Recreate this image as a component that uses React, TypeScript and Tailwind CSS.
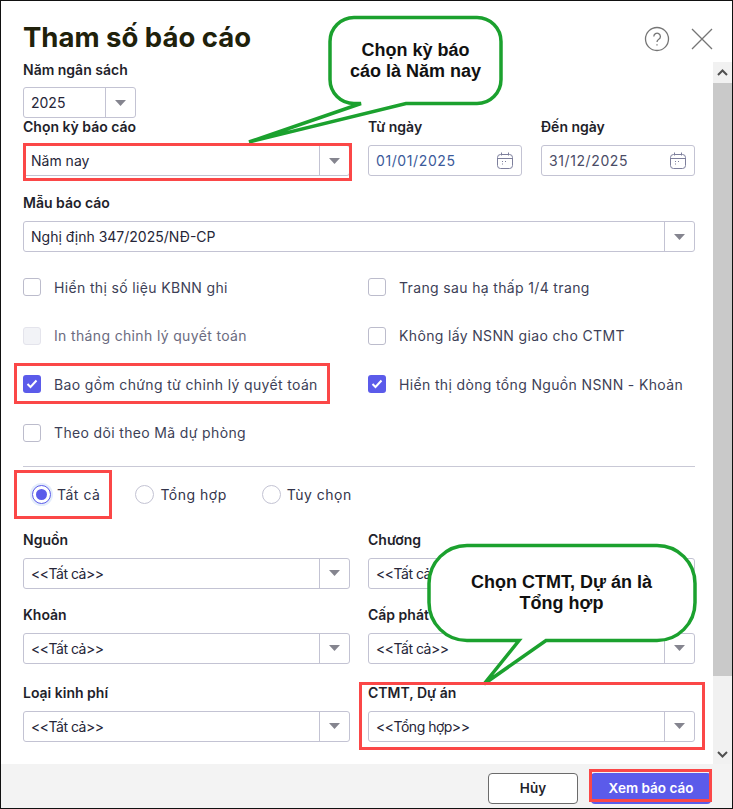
const font = { fontFamily: "Inter, sans-serif" };

function Arrow() {
  return (
    <svg width="11" height="6" viewBox="0 0 11 6">
      <path d="M0 0h11L5.500 6z" fill="#85858f" />
    </svg>
  );
}

function CalendarIcon() {
  return (
    <svg width="16" height="17" viewBox="0 0 16 17" fill="none" stroke="#7d7f9c" strokeWidth="1">
      <rect x="0.5" y="2.5" width="15" height="14" rx="3" />
      <path d="M0.5 6.5h15M4.5 0.5v3M11.5 0.5v3" />
      <path d="M5 9.5h1M8 9.500h1M5 12h1" />
    </svg>
  );
}

function Select({ value, className = "" }: { value: string; className?: string }) {
  return (
    <div className={`flex h-[31px] items-stretch rounded-[3px] border border-[#c3c3d3] bg-white ${className}`}>
      <div className={`flex flex-1 items-center truncate pl-[7px] text-[14px] text-[#262638] ${value.startsWith("<<") ? "tracking-[-0.5px]" : ""}`}>
        {value}
      </div>
      <div className="flex w-[30px] items-center justify-center border-l border-[#c3c3d3]">
        <Arrow />
      </div>
    </div>
  );
}

function Field({ label, value, className = "" }: { label: string; value: string; className?: string }) {
  return (
    <div className={className}>
      <div className="text-[14px] leading-[18px] font-semibold text-[#1f1f2b]">{label}</div>
      <Select value={value} className="mt-[9px]" />
    </div>
  );
}

function DateField({ label, value, color }: { label: string; value: string; color: string }) {
  return (
    <div className="w-[154px]">
      <div className="text-[14px] leading-[18px] font-semibold text-[#1f1f2b]">{label}</div>
      <div className="mt-[9px] flex h-[31px] items-center justify-between rounded-[3px] border border-[#c3c3d3] bg-white pr-[8px] pl-[7px]">
        <span className={`text-[14px] tracking-[0.6px] ${color}`}>{value}</span>
        <CalendarIcon />
      </div>
    </div>
  );
}

function Check({ label, state }: { label: string; state?: "on" | "disabled" }) {
  return (
    <div className="flex h-[18px] items-center gap-[13px]">
      {state === "on" ? (
        <span className="flex h-[18px] w-[18px] items-center justify-center rounded-[3px] bg-[#5b5bea]">
          <svg width="12" height="10" viewBox="0 0 12 10" fill="none" stroke="#fff" strokeWidth="2">
            <path d="M1.5 5l3 3 6-6.500" />
          </svg>
        </span>
      ) : state === "disabled" ? (
        <span className="h-[18px] w-[18px] rounded-[3px] border border-[#e4e4ec] bg-[#f2f3f7]" />
      ) : (
        <span className="h-[18px] w-[18px] rounded-[3px] border border-[#bcbccc] bg-white" />
      )}
      <span className={`text-[14px] tracking-[0.35px] ${state === "disabled" ? "text-[#6b6b80]" : "text-[#3d3f57]"}`}>{label}</span>
    </div>
  );
}

function Radio({ label, on }: { label: string; on?: boolean }) {
  return (
    <div className="flex items-center gap-[6px]">
      {on ? (
        <span className="flex h-[19px] w-[19px] items-center justify-center rounded-full border border-[#5b5bea] bg-white shadow-[0_0_0_2px_#e3ecfb]">
          <span className="h-[11px] w-[11px] rounded-full bg-[#5b5bea]" />
        </span>
      ) : (
        <span className="h-[19px] w-[19px] rounded-full border border-[#c3c3d3] bg-white" />
      )}
      <span className="text-[14px] tracking-[0.5px] text-[#33344a]">{label}</span>
    </div>
  );
}

export default function App() {
  return (
    <div style={font} className="relative flex h-[809px] w-[733px] flex-col overflow-hidden border border-[#111] bg-white">
      <div className="flex h-[60px] shrink-0 items-start justify-between pt-[18px] pr-[19px] pl-[22px]">
        <h1 className="text-[27.5px] leading-[36px] font-bold text-[#20210b]">Tham số báo cáo</h1>
        <div className="flex items-center gap-[21px] pt-[7px]">
          <svg width="26" height="26" viewBox="0 0 26 26" fill="none" stroke="#757575" strokeWidth="1.300">
            <circle cx="13" cy="13" r="11.5" />
            <path d="M9.800 10.500a3.300 3.300 0 1 1 5 2.800c-1.200.8-1.800 1.300-1.800 2.700" />
            <path d="M13 18.200v1.400" />
          </svg>
          <svg width="22" height="22" viewBox="0 0 22 22" fill="none" stroke="#757575" strokeWidth="1.300">
            <path d="M1 1l20 20M21 1L1 21" />
          </svg>
        </div>
      </div>

      <div className="flex min-h-0 flex-1">
        <div className="min-w-0 flex-1 pr-[18px] pl-[22px]">
          <div className="text-[14px] leading-[18px] font-semibold text-[#1f1f2b]">Năm ngân sách</div>
          <Select value="2025" className="mt-[8px] w-[113px]" />

          <div className="flex justify-between">
            <Field label="Chọn kỳ báo cáo" value="Năm nay" className="w-[327px]" />
            <div className="flex gap-[19px]">
              <DateField label="Từ ngày" value="01/01/2025" color="text-[#3b5a9a]" />
              <DateField label="Đến ngày" value="31/12/2025" color="text-[#4a4c66]" />
            </div>
          </div>

          <Field label="Mẫu báo cáo" value="Nghị định 347/2025/NĐ-CP" className="mt-[18px]" />

          <div className="mt-[26px] grid grid-cols-2 gap-x-[18px] gap-y-[30.67px]">
            <Check label="Hiển thị số liệu KBNN ghi" />
            <Check label="Trang sau hạ thấp 1/4 trang" />
            <Check label="In tháng chỉnh lý quyết toán" state="disabled" />
            <Check label="Không lấy NSNN giao cho CTMT" />
            <Check label="Bao gồm chứng từ chỉnh lý quyết toán" state="on" />
            <Check label="Hiển thị dòng tổng Nguồn NSNN - Khoản" state="on" />
            <Check label="Theo dõi theo Mã dự phòng" />
          </div>

          <div className="mt-[24px] h-px bg-[#c9c9d6]" />

          <div className="mt-[17px] flex gap-[35px] pl-[9px]">
            <Radio label="Tất cả" on />
            <Radio label="Tổng hợp" />
            <Radio label="Tùy chọn" />
          </div>

          <div className="mt-[26px] grid grid-cols-2 gap-x-[18px] gap-y-[17px]">
            <Field label="Nguồn" value="<<Tất cả>>" />
            <Field label="Chương" value="<<Tất cả>>" />
            <Field label="Khoản" value="<<Tất cả>>" />
            <Field label="Cấp phát" value="<<Tất cả>>" />
            <Field label="Loại kinh phí" value="<<Tất cả>>" className="mt-[3px]" />
            <Field label="CTMT, Dự án" value="<<Tổng hợp>>" className="mt-[3px]" />
          </div>
        </div>

        {/* scrollbar */}
        <div className="mt-[1px] flex w-[19px] shrink-0 flex-col bg-[#f1f1f1]">
          <div className="flex h-[21px] items-center justify-center">
            <svg width="11" height="7" viewBox="0 0 11 7" fill="none" stroke="#505050" strokeWidth="2">
              <path d="M1 6l4.500-4.500L10 6" />
            </svg>
          </div>
          <div className="h-[593px] bg-[#c9c9c9]" />
          <div className="flex flex-1 items-end justify-center pb-[6px]">
            <svg width="11" height="7" viewBox="0 0 11 7" fill="none" stroke="#505050" strokeWidth="2">
              <path d="M1 1l4.500 4.500L10 1" />
            </svg>
          </div>
        </div>
      </div>

      <div className="flex h-[44px] shrink-0 items-center justify-end gap-[13px] bg-[#f3f3f3] pt-[4px] pr-[21px]">
        <button className="h-[31px] w-[90px] rounded-[4px] border border-[#6b6b6b] bg-white text-[13.5px] font-semibold text-[#1f1f2b]">Hủy</button>
        <button className="h-[31px] w-[120px] rounded-[4px] bg-[#5b5bea] text-[13.5px] font-semibold text-white">Xem báo cáo</button>
      </div>

      {/* annotations */}
      <svg className="absolute top-[-1px] left-[-1px]" width="733" height="809" fill="#fff" stroke="#1ba12e" strokeWidth="3.500">
        <path d="M354 17.500h123a24 24 0 0 1 24 24v38a24 24 0 0 1-24 24h-71L249 142l112-38.500h-7a24 24 0 0 1-24-24v-38a24 24 0 0 1 24-24z" />
        <path d="M467 545.500h190a38 38 0 0 1 38 38v19a38 38 0 0 1-38 38H546L484 684l35-43.500h-52a38 38 0 0 1-38-38v-19a38 38 0 0 1 38-38z" />
      </svg>
      <div className="absolute top-[39px] left-[328px] w-[173px] text-center font-['Liberation_Sans'] text-[18px] leading-[21px] font-bold text-[#111]">
        Chọn kỳ báo
        <br />
        cáo là Năm nay
      </div>
      <div className="absolute top-[571px] left-[427px] w-[267px] text-center font-['Liberation_Sans'] text-[18px] leading-[21px] font-bold text-[#111]">
        Chọn CTMT, Dự án là
        <br />
        Tổng hợp
      </div>
      <div className="absolute top-[142px] left-[22px] h-[38px] w-[329px] border-[3px] border-[#fb4747]" />
      <div className="absolute top-[362px] left-[13px] h-[41px] w-[316px] border-[3px] border-[#fb4747]" />
      <div className="absolute top-[469px] left-[13px] h-[49px] w-[98px] border-[3px] border-[#fb4747]" />
      <div className="absolute top-[681px] left-[358px] h-[68px] w-[346px] border-[3px] border-[#fb4747]" />
      <div className="absolute top-[768px] left-[588px] h-[33px] w-[123px] border-[3px] border-[#fb4747]" />
    </div>
  );
}
